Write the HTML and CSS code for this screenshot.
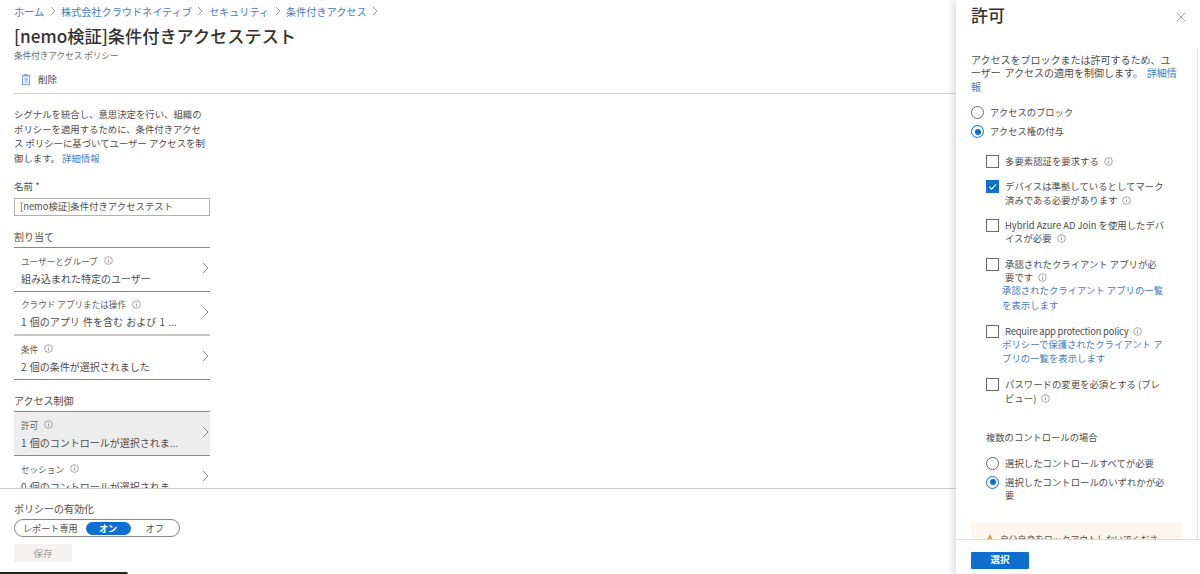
FILE: index.html
```html
<!DOCTYPE html>
<html lang="ja">
<head>
<meta charset="utf-8">
<title>条件付きアクセス</title>
<link rel="stylesheet" href="styles.css">
</head>
<body>
<svg class="defs" width="0" height="0" aria-hidden="true">
  <symbol id="info" viewBox="0 0 10 10"><circle cx="5" cy="5" r="4.3" fill="none" stroke="currentColor" stroke-width=".7"/><path d="M5 4.4v3M5 2.6v.9" stroke="currentColor" stroke-width=".8" fill="none"/></symbol>
  <symbol id="chev" viewBox="0 0 8 14"><path d="M1 1l5.8 6L1 13" fill="none" stroke="currentColor" stroke-width="1"/></symbol>
  <symbol id="crumb" viewBox="0 0 6 10"><path d="M1 1l4 4-4 4" fill="none" stroke="currentColor" stroke-width=".8"/></symbol>
</svg>
<div class="app">
  <main class="main">
    <nav class="crumbs">
      <a>ホーム</a><svg class="crumb-sep"><use href="#crumb"/></svg>
      <a>株式会社クラウドネイティブ</a><svg class="crumb-sep"><use href="#crumb"/></svg>
      <a>セキュリティ</a><svg class="crumb-sep"><use href="#crumb"/></svg>
      <a>条件付きアクセス</a><svg class="crumb-sep"><use href="#crumb"/></svg>
    </nav>
    <h1 class="title">[nemo検証]条件付きアクセステスト</h1>
    <div class="subtitle">条件付きアクセス ポリシー</div>
    <div class="cmdbar">
      <svg class="trash" viewBox="0 0 12 14"><path d="M1 2.5h10M4.2 2.5V1h3.6v1.5" fill="none" stroke="#5a8fd0" stroke-width=".9"/><rect x="1.8" y="2.5" width="8.4" height="10.8" fill="#dbe8f6" stroke="#5a8fd0" stroke-width=".9"/><path d="M6 6v5M4.6 7.4L6 6l1.4 1.4" fill="none" stroke="#5a8fd0" stroke-width=".7"/></svg>
      <span>削除</span>
    </div>
    <div class="content">
      <div class="column">
        <p class="intro">シグナルを統合し、意思決定を行い、組織のポリシーを適用するために、条件付きアクセス ポリシーに基づいてユーザー アクセスを制御します。 <a>詳細情報</a></p>
        <label class="name-label">名前 <span class="req">*</span></label>
        <div class="name-input">[nemo検証]条件付きアクセステスト</div>
        <h2 class="section first">割り当て</h2>
        <div class="rows">
          <div class="row"><div class="row-text"><div class="row-label">ユーザーとグループ<svg class="info"><use href="#info"/></svg></div><div class="row-value">組み込まれた特定のユーザー</div></div><svg class="chev"><use href="#chev"/></svg></div>
          <div class="row thick"><div class="row-text"><div class="row-label">クラウド アプリまたは操作<svg class="info"><use href="#info"/></svg></div><div class="row-value">1 個のアプリ 件を含む および 1 ...</div></div><svg class="chev"><use href="#chev"/></svg></div>
          <div class="row"><div class="row-text"><div class="row-label">条件<svg class="info"><use href="#info"/></svg></div><div class="row-value">2 個の条件が選択されました</div></div><svg class="chev"><use href="#chev"/></svg></div>
        </div>
        <h2 class="section">アクセス制御</h2>
        <div class="rows">
          <div class="row active"><div class="row-text"><div class="row-label">許可<svg class="info"><use href="#info"/></svg></div><div class="row-value">1 個のコントロールが選択されま...</div></div><svg class="chev"><use href="#chev"/></svg></div>
          <div class="row"><div class="row-text"><div class="row-label">セッション<svg class="info"><use href="#info"/></svg></div><div class="row-value">0 個のコントロールが選択されま...</div></div><svg class="chev"><use href="#chev"/></svg></div>
        </div>
      </div>
    </div>
    <footer class="main-foot">
      <div class="foot-label">ポリシーの有効化</div>
      <div class="toggle"><span class="opt">レポート専用</span><span class="opt on">オン</span><span class="opt">オフ</span></div>
      <button class="save">保存</button>
    </footer>
  </main>
  <aside class="blade">
    <header class="blade-head">
      <h2 class="blade-title">許可</h2>
      <svg class="close" viewBox="0 0 10 10"><path d="M.7.7l8.6 8.6M9.3.7L.7 9.3" stroke="#8a8a8a" stroke-width=".8" fill="none"/></svg>
    </header>
    <div class="blade-body">
      <p class="blade-intro">アクセスをブロックまたは許可するため、ユーザー アクセスの適用を制御します。 <a>詳細情報</a></p>
      <div class="radio-group">
        <div class="radio"><span class="dot"></span>アクセスのブロック</div>
        <div class="radio"><span class="dot sel"></span>アクセス権の付与</div>
      </div>
      <div class="checks">
        <div class="check"><span class="box"></span><div class="check-text">多要素認証を要求する<svg class="info"><use href="#info"/></svg></div></div>
        <div class="check"><span class="box on"><svg viewBox="0 0 10 10"><path d="M2 5.2l2.2 2.2L8.2 3" fill="none" stroke="#fff" stroke-width="1"/></svg></span><div class="check-text">デバイスは準拠しているとしてマーク<br>済みである必要があります<svg class="info"><use href="#info"/></svg></div></div>
        <div class="check"><span class="box"></span><div class="check-text">Hybrid Azure AD Join を使用したデバ<br>イスが必要<svg class="info"><use href="#info"/></svg></div></div>
        <div class="check"><span class="box"></span><div class="check-text">承認されたクライアント アプリが必<br>要です<svg class="info"><use href="#info"/></svg><a class="check-link">承認されたクライアント アプリの一覧<br>を表示します</a></div></div>
        <div class="check"><span class="box"></span><div class="check-text"><span class="tight">Require app protection policy</span><svg class="info"><use href="#info"/></svg><a class="check-link">ポリシーで保護されたクライアント ア<br>プリの一覧を表示します</a></div></div>
        <div class="check"><span class="box"></span><div class="check-text">パスワードの変更を必須とする (プレ<br>ビュー)<svg class="info"><use href="#info"/></svg></div></div>
      </div>
      <div class="multi-label">複数のコントロールの場合</div>
      <div class="multi">
        <div class="radio"><span class="dot"></span>選択したコントロールすべてが必要</div>
        <div class="radio"><span class="dot sel"></span><span>選択したコントロールのいずれかが必<br>要</span></div>
      </div>
      <div class="warning"><svg class="warn-icon" viewBox="0 0 10 10"><path d="M5 .6L9.8 9.4H.2z" fill="#e8860c"/><path d="M5 3.6v3M5 7.3v1" stroke="#fff" stroke-width=".9"/></svg>自分自身をロックアウトしないでくださ<br>い</div>
    </div>
    <footer class="blade-foot"><button class="primary">選択</button></footer>
  </aside>
</div>
<div class="tooltip-edge"></div>
</body>
</html>
```

FILE: styles.css
```css
* { box-sizing: border-box; }
html, body { margin: 0; height: 100%; overflow: hidden; background: #fff; }
body {
  font-family: "Noto Sans CJK JP", "Noto Sans", "Liberation Sans", sans-serif;
  color: #4d4b49;
  font-size: 9.5px;
  position: relative;
}
a { color: #3f7cc4; }
.defs { position: absolute; }
.app { display: flex; height: 574px; }

.main { width: 956px; display: flex; flex-direction: column; height: 574px; }
.crumbs {
  display: flex; align-items: center; gap: 5.5px;
  padding: 3px 0 0 14px; height: 19px; font-size: 10.15px; flex: none;
}
.crumb-sep { width: 6px; height: 10px; color: #8a8886; }
.title { margin: 5px 0 0 14px; font-size: 17.2px; line-height: 24px; font-weight: 500; color: #323130; flex: none; }
.subtitle { margin: 1px 0 0 14px; font-size: 8.6px; line-height: 13px; color: #6a6866; flex: none; }
.cmdbar {
  display: flex; align-items: center; gap: 7px;
  margin: 0 0 0 14px; padding: 3px 0 0 7px;
  border-bottom: 1px solid #d9d8d6; font-size: 9.5px; flex: none;
  height: 32px;
}
.trash { width: 10px; height: 13px; }
.content { flex: 1; overflow: hidden; padding: 13px 0 0 14px; min-height: 0; }
.column { width: 196px; }
.intro { margin: 0; line-height: 14.6px; font-size: 9.4px; }
.name-label { display: block; margin-top: 14px; font-size: 9.5px; line-height: 14px; }
.req { color: #a4262c; }
.name-input {
  margin-top: 5px; height: 18px; border: 1px solid #b3b1af;
  padding-left: 5px; font-size: 9.4px; line-height: 15px;
}
.section { margin: 0; font-size: 10px; font-weight: 400; line-height: 14px; padding-top: 14px; height: 31px; }
.rows { border-top: 1px solid #8a8886; }
.row {
  display: flex; align-items: center; justify-content: space-between;
  height: 44px; padding: 0 1px 0 7px; border-bottom: 1px solid #8a8886;
}
.row.thick { border-bottom: 2px solid #c6c5c3; }
.row.active { background: #ededed; }
.row-text { min-width: 0; }
.row-label { font-size: 8.6px; line-height: 14px; color: #605e5c; display: flex; align-items: center; }
.row-value { font-size: 10px; line-height: 14px; margin-top: 4px; white-space: nowrap; word-spacing: 1px; }
.info { width: 9px; height: 9px; margin-left: 6px; color: #77756f; flex: none; vertical-align: -1px; }
.chev { width: 7px; height: 14px; color: #77756f; margin-top: -3px; }

.main-foot { height: 86px; flex: none; border-top: 1px solid #cfcecc; padding: 13px 0 0 14px; }
.foot-label { font-size: 10px; line-height: 14px; }
.toggle {
  display: flex; align-items: center; width: 166px; height: 18px; margin-top: 3px;
  border: 1px solid #8a8886; border-radius: 9px; padding: 0 3px 0 8px; font-size: 9.1px;
}
.opt { white-space: nowrap; }
.opt:nth-child(3) { margin-left: 15px; }
.opt.on {
  background: #0f6fce; color: #fff; font-weight: 700; border-radius: 7px;
  width: 45px; height: 13px; line-height: 13px; text-align: center; margin-left: 8px;
}
.save {
  display: block; width: 58px; height: 18px; margin-top: 7px; border: 0;
  background: #f3f2f1; color: #a19f9d; font: inherit; font-size: 9.5px; padding: 0;
}

.blade {
  width: 244px; height: 574px; display: flex; flex-direction: column;
  box-shadow: -3px 0 8px rgba(0,0,0,.14); background: #fff; position: relative;
}
.blade-head { display: flex; justify-content: space-between; align-items: flex-start; height: 48px; padding: 3px 14px 0 15px; flex: none; }
.blade-title { margin: 0; font-size: 17px; font-weight: 500; color: #323130; line-height: 24px; }
.close { width: 10px; height: 10px; margin-top: 9px; }
.blade-body { flex: 1; min-height: 0; overflow: hidden; padding: 5px 15px 0 15px; margin-right: 2px; border-right: 1px solid #e3e2e0; }
.blade-intro { margin: 0; font-size: 10px; line-height: 13.4px; width: 208px; word-spacing: 1.5px; }
.radio-group { margin-top: 13px; }
.radio { display: flex; align-items: flex-start; font-size: 9.3px; line-height: 13.4px; min-height: 19px; }
.dot {
  width: 13px; height: 13px; border-radius: 50%; border: 1px solid #6a6866;
  margin-right: 6px; flex: none; position: relative; background: #fff;
}
.dot.sel { border-color: #0f6fce; }
.dot.sel::after {
  content: ""; position: absolute; left: 2.5px; top: 2.5px; width: 6px; height: 6px;
  border-radius: 50%; background: #0f6fce;
}
.checks { margin: 10.5px 0 0 15px; }
.check { display: flex; margin-bottom: 12px; }
.box {
  width: 13px; height: 13px; border: 1px solid #6a6866; flex: none; margin: 0 6px 0 0;
}
.box.on { background: #0f6fce; border-color: #0f6fce; }
.box svg { display: block; width: 11px; height: 11px; }
.check-text { font-size: 9.4px; line-height: 13.4px; white-space: nowrap; }
.check-text .info { margin-left: 5px; }
.tight { letter-spacing: -.2px; }
.check-link { display: block; margin: -1.5px 0 .5px -3px; line-height: 14.6px; font-size: 9.4px; }
.multi-label { margin: 25.5px 0 0 15px; font-size: 9.3px; line-height: 13.4px; }
.multi { margin: 12.5px 0 0 15px; font-size: 9.4px; }
.multi .radio { font-size: 9.4px; }
.warning {
  margin: 19.5px 0 0 0; background: #fdf6ee; height: 60px; padding: 11px 0 0 14px;
  font-size: 8.8px; border-radius: 2px; white-space: nowrap; overflow: hidden;
}
.warn-icon { width: 10px; height: 10px; margin-right: 5px; vertical-align: -1px; }
.blade-foot { height: 35px; flex: none; border-top: 1px solid #dcdbd9; padding: 12px 0 0 15px; background: #fff; }
.primary {
  display: block; width: 58px; height: 17px; background: #0f6fce; color: #fff; border: 0; padding: 0 0 3px;
  font: inherit; font-size: 9.5px; font-weight: 700; border-radius: 1px;
}
.tooltip-edge { position: absolute; left: 0; bottom: 0; width: 128px; height: 2px; background: #222; border-radius: 0 2px 0 0; }
```
